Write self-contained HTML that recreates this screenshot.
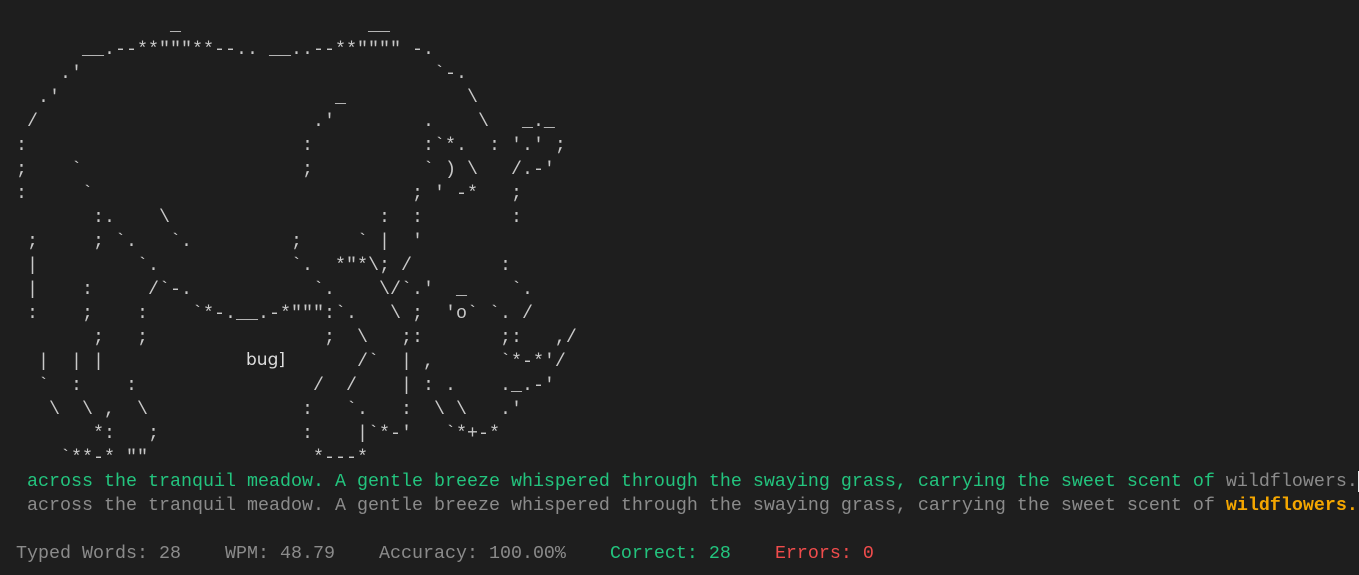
<!DOCTYPE html>
<html><head><meta charset="utf-8"><style>
html,body{margin:0;padding:0;background:#1e1e1e;width:1359px;height:575px;overflow:hidden}
pre{position:absolute;left:16px;top:14px;margin:0;font-family:"Liberation Mono",monospace;font-size:18.33px;line-height:24px;color:#c8c8c8;white-space:pre}
.g{color:#23c47e}.m{color:#8b8b8b}.o{color:#f5a700;font-weight:bold}.r{color:#f14c4c}
.cur{background:#e8e8e8;color:#1e1e1e}
.bug{position:absolute;left:246px;top:350px;font-family:"DejaVu Sans","Liberation Sans",sans-serif;font-size:17px;color:#dddddd}
</style></head><body>
<pre>              _                 __
      __.--**"""**--.. __..--**"""" -.
    .'                                `-.
  .'                         _           \
 /                         .'        .    \   _._
:                         :          :`*.  : '.' ;
;    `                    ;          ` ) \   /.-'
:     `                             ; ' -*   ;
       :.    \                   :  :        :
 ;     ; `.   `.         ;     ` |  '
 |         `.            `.  *"*\; /        :
 |    :     /`-.           `.    \/`.'  _    `.
 :    ;    :    `*-.__.-*""":`.   \ ;  'o` `. /
       ;   ;                ;  \   ;:       ;:   ,/
  |  | |                       /`  | ,      `*-*'/
  `  :    :                /  /    | : .    ._.-'
   \  \ ,  \              :   `.   :  \ \   .'
       *:   ;             :    |`*-'   `*+-*
    `**-* ""               *---*
<span class="g"> across the tranquil meadow. A gentle breeze whispered through the swaying grass, carrying the sweet scent of </span><span class="m">wildflowers.</span><span class="cur"> </span>
<span class="m"> across the tranquil meadow. A gentle breeze whispered through the swaying grass, carrying the sweet scent of </span><span class="o">wildflowers.</span>

<span class="m">Typed Words: 28    WPM: 48.79    Accuracy: 100.00%    </span><span class="g">Correct: 28</span>    <span class="r">Errors: 0</span></pre>
<div class="bug">bug]</div>
</body></html>
